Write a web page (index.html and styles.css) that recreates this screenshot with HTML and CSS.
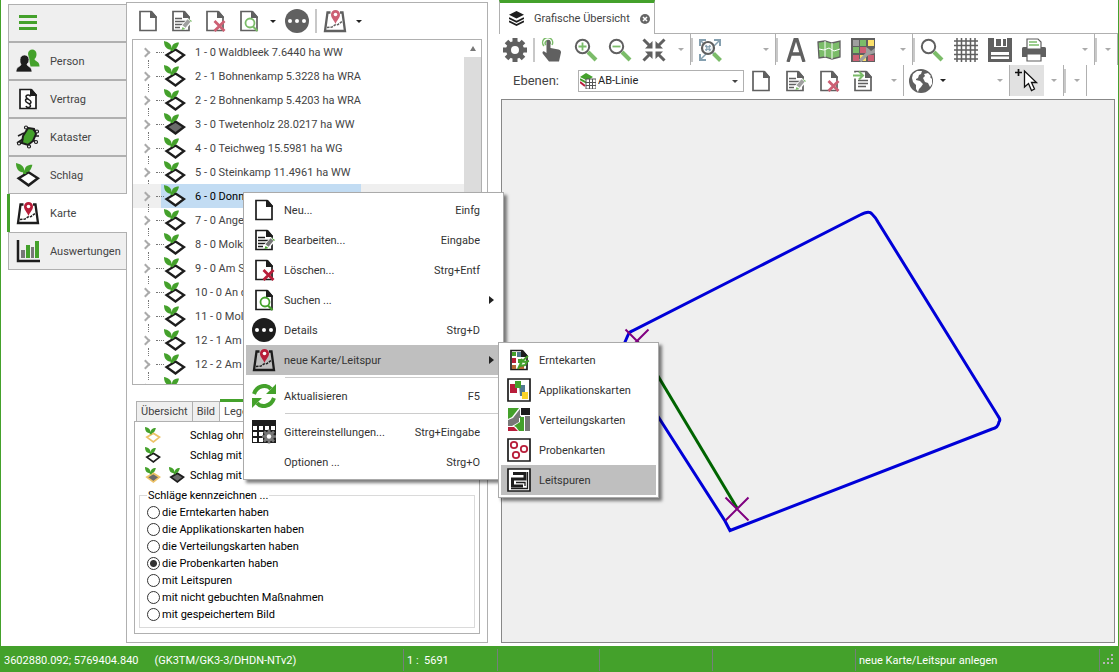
FILE: index.html
```html
<!DOCTYPE html>
<html lang="de">
<head>
<meta charset="utf-8">
<meta name="viewport" content="width=device-width, initial-scale=1">
<title>Grafische Übersicht</title>
<link rel="stylesheet" href="styles.css">
</head>
<body>
<svg class="sprite" aria-hidden="true">
  <symbol id="doc" viewBox="0 0 24 24"><path d="M4 2.500h11L20 8v13.500H4z" fill="#fff" stroke="#1d1d1d" stroke-width="1.700"/><path d="M14 2h2l5 6v1h-7z" fill="#1d1d1d"/></symbol>
  <symbol id="edit" viewBox="0 0 24 24"><use href="#doc"/><path d="M6 9.500h7M6 12.500h11M6 15.500h8M6 18.500h5" stroke="#1d1d1d" stroke-width="1.500"/><path d="M14 19l7-8" stroke="#fff" stroke-width="6"/><path d="M15 17.500l5-6" stroke="#777" stroke-width="4"/><path d="M19 9.500l4 2.500-1 1M12.500 21l1-3 3 2z" fill="#44a12b"/></symbol>
  <symbol id="delete" viewBox="0 0 24 24"><use href="#doc"/><path d="M11.500 12l10 10M21.500 12l-10 10" stroke="#b81e3a" stroke-width="2.800"/></symbol>
  <symbol id="search" viewBox="0 0 24 24"><use href="#doc"/><circle cx="13" cy="14" r="4.500" fill="none" stroke="#44a12b" stroke-width="1.800"/><path d="M16 17.500l4.500 4.500" stroke="#44a12b" stroke-width="2.200"/></symbol>
  <symbol id="dots" viewBox="0 0 24 24"><circle cx="12" cy="12" r="12" fill="#1d1d1d"/><g fill="#fff"><circle cx="5" cy="12" r="2"/><circle cx="12" cy="12" r="2"/><circle cx="19" cy="12" r="2"/></g></symbol>
  <symbol id="karte" viewBox="0 0 24 24"><path d="M7.500 3.500H4.500L2 22h20L19.500 3.500H17" fill="none" stroke="#1d1d1d" stroke-width="2.300"/><path d="M4 18.500l5-.5 3-2 3-.5 4-3" fill="none" stroke="#1d1d1d" stroke-width="1.500" stroke-dasharray="2.500 1"/><path d="M12.500 15C11 11 8 9 8 5.500a4.500 4.500 0 0 1 9 0C17 9 14 11 12.500 15z" fill="#b81e3a"/><circle cx="12.500" cy="5.500" r="1.800" fill="#fff"/></symbol>
  <symbol id="leaf" viewBox="0 0 22 22"><path d="M0 0c4 1 7.500 2 8 8.500C3 9 0 6 0 0zM15 1.500c-5 0-7.500 2-7 7C12 9 14 6 15 1.500z" fill="#44a12b"/><path d="M6.500 7v3h3L9 7z" fill="#44a12b"/></symbol>
  <symbol id="field" viewBox="0 0 22 22"><path d="M11.500 8.500L20 14l-8.500 6.500L2.500 14z" fill="#fff" stroke="#1d1d1d" stroke-width="2.300"/><use href="#leaf" width="22" height="22"/></symbol>
  <symbol id="fielddark" viewBox="0 0 22 22"><path d="M11.500 8.500L20 14l-8.500 6.500L2.500 14z" fill="#6b6b6b" stroke="#1d1d1d" stroke-width="2.300"/><use href="#leaf" width="22" height="22"/></symbol>
  <symbol id="fieldgold" viewBox="0 0 22 22"><path d="M11.500 8.500L20 14l-8.500 6.500L2.500 14z" fill="#fff" stroke="#edc267" stroke-width="2.300"/><use href="#leaf" width="22" height="22"/></symbol>
  <symbol id="fieldgolddark" viewBox="0 0 22 22"><path d="M11.500 8.500L20 14l-8.500 6.500L2.500 14z" fill="#6b6b6b" stroke="#edc267" stroke-width="2.300"/><use href="#leaf" width="22" height="22"/></symbol>
  <symbol id="burger" viewBox="0 0 24 24"><path d="M3 5.500h18M3 11.500h18M3 17.500h18" stroke="#44a12b" stroke-width="3"/></symbol>
  <symbol id="person" viewBox="0 0 24 24"><path d="M12 5c0-6 8.500-6 8.500 0 0 3-1 4-2 5 .5 3 5 1.500 5 7.500h-9z" fill="#44a12b"/><path d="M4 10.500c0-6 9-6 9 0 0 3-1 3.500-2 4.500 0 3 5 2 5 8H0c0-6 5-5 5-8-1-1-1-1.500-1-4.500z" fill="#1d1d1d" stroke="#efefef" stroke-width=".7"/></symbol>
  <symbol id="vertrag" viewBox="0 0 24 24"><use href="#doc"/><path d="M14.500 9.500c-.5-2-4.500-2-4.500.3 0 2.400 5 2.700 5 5.200 0 1.300-1 1.700-2 1.700M10 19c.5 2 4.500 2 4.500-.3 0-2.400-5-2.700-5-5.200 0-1.300 1-1.700 2-1.700" fill="none" stroke="#1d1d1d" stroke-width="1.500"/></symbol>
  <symbol id="kataster" viewBox="0 0 24 24"><path d="M12 3l6 1 2 5-3 7-5 4-6-2 1-7z" fill="#44a12b" stroke="#1d1d1d" stroke-width="2"/><path d="M12 4L9 2M17 5l4 2M8 8l-6 3M19 11l4 0M7 14l-6 4M17 15l4 3M12 19l2 3M6 17l-4 2" stroke="#1d1d1d" stroke-width="1.700"/><g fill="#fff" stroke="#1d1d1d" stroke-width="1.200"><circle cx="10" cy="2.500" r="1.500"/><circle cx="21" cy="6.500" r="1.500"/><circle cx="20" cy="17" r="1.500"/><circle cx="13" cy="21.500" r="1.500"/><circle cx="3" cy="18.500" r="1.500"/></g></symbol>
  <symbol id="bars" viewBox="0 0 24 24"><path d="M2 1v21h22" fill="none" stroke="#1d1d1d" stroke-width="2.500"/><path d="M5 11h4v8H5zM15 8h3v11h-3z" fill="#777"/><path d="M10 6h4v13h-4zM19 2h4v17h-4z" fill="#44a12b"/></symbol>
  <symbol id="layers" viewBox="0 0 16 16"><path d="M8 0l8 4-8 4-8-4z" fill="#1d1d1d"/><path d="M0 7.500l8 4 8-4M0 11l8 4 8-4" fill="none" stroke="#1d1d1d" stroke-width="1.800"/></symbol>
  <symbol id="gear" viewBox="0 0 24 24"><circle cx="12" cy="12" r="6.500" fill="none" stroke="#1d1d1d" stroke-width="5"/><path d="M12 0v5M12 19v5M0 12h5M19 12h5M3.500 3.500l4 4M16.500 16.500l4 4M3.500 20.500l4-4M16.500 7.500l4-4" stroke="#1d1d1d" stroke-width="5"/></symbol>
  <symbol id="hand" viewBox="0 0 24 24"><path d="M4 8a5 5 0 1 1 8-1M6 7a2.500 2.500 0 1 1 4-1" fill="none" stroke="#44a12b" stroke-width="1.500"/><path d="M6.500 4c0-3 4-3 4 0v6l8 1.500c2 .5 2.500 1.500 2.500 3L19 23.500H9L3 16c-1.500-2 .5-4 2-2l1.500 1z" fill="#1d1d1d"/></symbol>
  <symbol id="lens" viewBox="0 0 24 24"><circle cx="8.500" cy="8.500" r="6.700" fill="#fff" stroke="#1d1d1d" stroke-width="2"/><path d="M14 14l8 8" stroke="#44a12b" stroke-width="4"/></symbol>
  <symbol id="zoomin" viewBox="0 0 24 24"><use href="#lens"/><path d="M4.500 8.500h8M8.500 4.500v8" stroke="#44a12b" stroke-width="1.800"/></symbol>
  <symbol id="zoomout" viewBox="0 0 24 24"><use href="#lens"/><path d="M4.500 8.500h8" stroke="#44a12b" stroke-width="1.800"/></symbol>
  <symbol id="shrink" viewBox="0 0 24 24"><path d="M1.500 1.500l6 6M22.500 1.500l-6 6M1.500 22.500l6-6M22.500 22.500l-6-6" stroke="#1d1d1d" stroke-width="3"/><path d="M10.500 10.500H3l7.500-7.500zM13.500 10.500H21L13.500 3zM10.500 13.500H3l7.500 7.500zM13.500 13.500H21L13.500 21z" fill="#1d1d1d"/></symbol>
  <symbol id="fit" viewBox="0 0 24 24"><path d="M3 3l18 18M21 3L3 21" stroke="#527990" stroke-width="1.500"/><circle cx="10" cy="10" r="6" fill="#fff" fill-opacity=".8" stroke="#1d1d1d" stroke-width="2.200"/><path d="M15.500 15.500l7 7" stroke="#44a12b" stroke-width="4"/><path d="M2 8V2h6M16 2h6v6M2 16v6h6M7.500 7.500l2 2M12.500 7.500l-2 2M7.500 12.500l2-2M12.500 12.500l-2-2" fill="none" stroke="#527990" stroke-width="2"/></symbol>
  <symbol id="letter" viewBox="0 0 24 24"><path d="M5 24L12 1.500h2L21 24M8 16h10" fill="none" stroke="#1d1d1d" stroke-width="3.300"/></symbol>
  <symbol id="map" viewBox="0 0 24 24"><path d="M1 4l7-1 7 2 8-2v16l-8 2-7-2-6 1z" fill="#44a12b" stroke="#1d1d1d" stroke-width="1.300"/><path d="M8 3v16M15 5v16M2 11l5 1 5-2 5 3 6-2" fill="none" stroke="#fff"/></symbol>
  <symbol id="colors" viewBox="0 0 24 24"><path d="M0 0h24v24H0z" fill="#1d1d1d"/><path d="M2 2h6v6H2z" fill="#777"/><path d="M9 2h6v6H9zM2 9h6v6H2z" fill="#44a12b"/><path d="M17 2h6v6h-6z" fill="#fbd52c"/><path d="M9 9h6v6H9zM2 17h6v6H2zM17 17h6v6h-6z" fill="#b81e3a"/><path d="M9 17h6v6H9z" fill="#fbd52c"/><path d="M9 23l9-9" stroke="#777" stroke-width="3.500"/><path d="M15 9v5l3 3 6-2v-5l-4 3-2-2z" fill="#777"/></symbol>
  <symbol id="hash" viewBox="0 0 24 24"><path d="M3 0v24M7.500 0v24M12 0v24M16.500 0v24M21 0v24M0 3h24M0 7.500h24M0 12h24M0 16.500h24M0 21h24" stroke="#1d1d1d" stroke-width="1.500"/></symbol>
  <symbol id="floppy" viewBox="0 0 24 24"><path d="M0 0h24v24H0z" fill="#1d1d1d"/><path d="M6 0h13v9H6zM3 14h18v7H3z" fill="#fff"/><path d="M8 1h5v7H8zM15 1h3v7h-3zM3 17h18v1.500H3z" fill="#1d1d1d"/></symbol>
  <symbol id="printer" viewBox="0 0 24 24"><path d="M0 11c0-2 1-2 3-2h18c2 0 3 0 3 2v8H0z" fill="#1d1d1d"/><path d="M5 1h11l3 3v7H5zM5 16h14v7H5z" fill="#fff" stroke="#1d1d1d" stroke-width="1.200"/><path d="M7 4h8M7 7h10" stroke="#44a12b" stroke-width="1.500"/></symbol>
  <symbol id="list" viewBox="0 0 24 24"><use href="#doc"/><path d="M7 11.500h10M7 14.500h10M7 17.500h8" stroke="#1d1d1d" stroke-width="1.500"/><path d="M2 3.500h7v6H2z" fill="#fff"/><path d="M2 6.500h9M8 2.500l4 4-4 4" fill="none" stroke="#44a12b" stroke-width="2"/></symbol>
  <symbol id="globe" viewBox="0 0 24 24"><circle cx="12" cy="12" r="12" fill="#1d1d1d"/><path d="M4 5l4-3 5 0-1 3-2 1-1 3-2 1 0 1 4 1 3 3-2 3-2 2-1 3-2-3 0-4-3-3-1-4zM15 5l4-1 3 3-1 1 2 2 0 5-2 3-2-4-3-1-2-4 2-2z" fill="#fff"/></symbol>
  <symbol id="cursor" viewBox="0 0 24 24"><path d="M0 3.500h7M3.500 0v7" stroke="#111" stroke-width="1.700"/><path d="M9.500 2v16l4-3.500 3 7 3-1.500-3-6.500h5z" fill="#fff" stroke="#111" stroke-width="1.300"/></symbol>
  <symbol id="refresh" viewBox="0 0 24 24"><path d="M2 10C5 1 15 0 19 5M22 14c-3 9-13 10-17 5" fill="none" stroke="#44a12b" stroke-width="4"/><path d="M24 0v10H14zM0 24V14h10z" fill="#44a12b"/></symbol>
  <symbol id="gridgear" viewBox="0 0 24 24"><path d="M0 0h24v23H0z" fill="#1d1d1d"/><path d="M1 6h4v4H1zM7 6h4v4H7zM13 6h4v4h-4zM19 6h4v4h-4zM1 12h4v4H1zM7 12h4v4H7zM1 18h4v4H1zM7 18h4v4H7z" fill="#fff"/><circle cx="17" cy="16.500" r="5" fill="#777"/><path d="M17 9.500v14M10 16.500h14M12 11.500l10 10M22 11.500l-10 10" stroke="#777" stroke-width="2.500"/><circle cx="17" cy="16.500" r="2.200" fill="#fff"/></symbol>
  <symbol id="ernte" viewBox="0 0 24 24"><use href="#doc"/><path d="M5 4h4v4H5zM11 11h4v4h-4z" fill="#44a12b"/><path d="M5 10h4v5H5z" fill="#b81e3a"/><path d="M10 4h4v5h-4z" fill="#527990"/><path d="M5 17h4v4H5zM12 17h5v4h-5z" fill="#b66a35"/><path d="M11 21C13 15 16 12 21 8M12 14l3 2M14 11l3 3 5-1M13 18l5-1 2-3" fill="none" stroke="#44a12b" stroke-width="2"/></symbol>
  <symbol id="appli" viewBox="0 0 24 24"><path d="M1 1h22v22H1z" fill="#fff" stroke="#1d1d1d" stroke-width="1.700"/><path d="M12 7h6v11h-5z" fill="#527990"/><path d="M3 6h7v9H3z" fill="#b81e3a"/><path d="M8 3h6v7H8z" fill="#44a12b"/><path d="M15 14h6v7h-6z" fill="#fbd52c"/></symbol>
  <symbol id="verteil" viewBox="0 0 24 24"><path d="M1 0h11L5 9l-4 2z" fill="#44a12b"/><path d="M13 1v7h1v2h-2v4l-7 4H1v-6l5-2z" fill="#777"/><path d="M14 0h9v7h-9z" fill="#1d1d1d"/><path d="M13 9h4v14h-5l-3-4-2-1 6-4z" fill="#44a12b"/><path d="M18 8h5v15h-5z" fill="#777"/><path d="M1 19h6l4 4H1z" fill="#b81e3a"/></symbol>
  <symbol id="proben" viewBox="0 0 24 24"><path d="M1 1h22v22H1z" fill="#fff" stroke="#1d1d1d" stroke-width="1.700"/><g fill="none" stroke="#b81e3a" stroke-width="1.800"><circle cx="7" cy="7" r="3.200"/><circle cx="17" cy="11" r="3.200"/><circle cx="9" cy="17" r="3.200"/></g></symbol>
  <symbol id="leit" viewBox="0 0 24 24"><path d="M1 1h22v22H1z" fill="#fff" stroke="#1d1d1d" stroke-width="1.700"/><path d="M6 5.500h12V11H5.500v7H16" fill="none" stroke="#1d1d1d" stroke-width="3"/><path d="M20.500 4v16.500H4M9 14.500h9V18" fill="none" stroke="#1d1d1d" stroke-width="1.300"/></symbol>
  <symbol id="layergrid" viewBox="0 0 16 16"><path d="M0 9l5 4" stroke="#b81e3a" stroke-width="2"/><path d="M0 6l7 4" stroke="#44a12b" stroke-width="2"/><path d="M6 0l7 4-6 3.500L0 4z" fill="#44a12b"/><path d="M6 6h10v10H6z" fill="#fff" stroke="#555"/><path d="M9.500 6v10M12.500 6v10M6 9.500h10M6 12.500h10" stroke="#555"/></symbol>
</svg>

<div class="app">
  <main class="main">
    <nav class="nav" aria-label="Hauptmenü">
      <button class="nav-item" aria-label="Menü"><svg class="icon"><use href="#burger"/></svg></button>
      <button class="nav-item"><svg class="icon"><use href="#person"/></svg>Person</button>
      <button class="nav-item"><svg class="icon"><use href="#vertrag"/></svg>Vertrag</button>
      <button class="nav-item"><svg class="icon"><use href="#kataster"/></svg>Kataster</button>
      <button class="nav-item"><svg class="icon"><use href="#field"/></svg>Schlag</button>
      <button class="nav-item active"><svg class="icon"><use href="#karte"/></svg>Karte</button>
      <button class="nav-item"><svg class="icon"><use href="#bars"/></svg>Auswertungen</button>
    </nav>

    <section class="side">
      <div class="side-tools">
        <button class="tool" aria-label="Neu"><svg class="icon"><use href="#doc"/></svg></button>
        <button class="tool" aria-label="Bearbeiten"><svg class="icon"><use href="#edit"/></svg></button>
        <button class="tool" aria-label="Löschen"><svg class="icon"><use href="#delete"/></svg></button>
        <button class="tool" aria-label="Suchen"><svg class="icon"><use href="#search"/></svg></button>
        <button class="drop dark" aria-label="Suchoptionen"></button>
        <button class="tool" aria-label="Details"><svg class="icon"><use href="#dots"/></svg></button>
        <span class="grip"></span>
        <button class="tool" aria-label="Karte"><svg class="icon"><use href="#karte"/></svg></button>
        <button class="drop dark" aria-label="Kartenoptionen"></button>
      </div>

      <div class="tree-box">
        <ul class="tree">
          <li class="row"><i class="chev"></i><i class="dots"></i><svg class="leaf"><use href="#field"/></svg><span>1 - 0 Waldbleek 7.6440 ha WW</span></li>
          <li class="row"><i class="chev"></i><i class="dots"></i><svg class="leaf"><use href="#field"/></svg><span>2 - 1 Bohnenkamp 5.3228 ha WRA</span></li>
          <li class="row"><i class="chev"></i><i class="dots"></i><svg class="leaf"><use href="#field"/></svg><span>2 - 2 Bohnenkamp 5.4203 ha WRA</span></li>
          <li class="row"><i class="chev"></i><i class="dots"></i><svg class="leaf"><use href="#fielddark"/></svg><span>3 - 0 Twetenholz 28.0217 ha WW</span></li>
          <li class="row"><i class="chev"></i><i class="dots"></i><svg class="leaf"><use href="#field"/></svg><span>4 - 0 Teichweg 15.5981 ha WG</span></li>
          <li class="row"><i class="chev"></i><i class="dots"></i><svg class="leaf"><use href="#field"/></svg><span>5 - 0 Steinkamp 11.4961 ha WW</span></li>
          <li class="row selected"><i class="chev"></i><i class="dots"></i><svg class="leaf"><use href="#field"/></svg><span>6 - 0 Donn</span></li>
          <li class="row"><i class="chev"></i><i class="dots"></i><svg class="leaf"><use href="#field"/></svg><span>7 - 0 Ange</span></li>
          <li class="row"><i class="chev"></i><i class="dots"></i><svg class="leaf"><use href="#field"/></svg><span>8 - 0 Molke</span></li>
          <li class="row"><i class="chev"></i><i class="dots"></i><svg class="leaf"><use href="#field"/></svg><span>9 - 0 Am S</span></li>
          <li class="row"><i class="chev"></i><i class="dots"></i><svg class="leaf"><use href="#field"/></svg><span>10 - 0 An d</span></li>
          <li class="row"><i class="chev"></i><i class="dots"></i><svg class="leaf"><use href="#field"/></svg><span>11 - 0 Moll</span></li>
          <li class="row"><i class="chev"></i><i class="dots"></i><svg class="leaf"><use href="#field"/></svg><span>12 - 1 Am</span></li>
          <li class="row"><i class="chev"></i><i class="dots"></i><svg class="leaf"><use href="#field"/></svg><span>12 - 2 Am</span></li>
          <li class="row"><i class="chev"></i><i class="dots"></i><svg class="leaf"><use href="#field"/></svg></li>
        </ul>
        <div class="scroll"><button class="scroll-up" aria-label="Nach oben"></button><div class="thumb"></div></div>
      </div>

      <div class="tabs">
        <button class="tab">Übersicht</button>
        <button class="tab">Bild</button>
        <button class="tab on">Legende</button>
      </div>
      <div class="legend">
        <div class="legend-row"><div class="keys"><svg class="mini"><use href="#fieldgold"/></svg></div>Schlag ohn</div>
        <div class="legend-row"><div class="keys"><svg class="mini"><use href="#field"/></svg></div>Schlag mit V</div>
        <div class="legend-row"><div class="keys"><svg class="mini"><use href="#fieldgolddark"/></svg><svg class="mini"><use href="#fielddark"/></svg></div>Schlag mit K</div>
        <fieldset class="marks">
          <legend>Schläge kennzeichnen ...</legend>
          <label><input type="radio" name="mark">die Erntekarten haben</label>
          <label><input type="radio" name="mark">die Applikationskarten haben</label>
          <label><input type="radio" name="mark">die Verteilungskarten haben</label>
          <label><input type="radio" name="mark" checked>die Probenkarten haben</label>
          <label><input type="radio" name="mark">mit Leitspuren</label>
          <label><input type="radio" name="mark">mit nicht gebuchten Maßnahmen</label>
          <label><input type="radio" name="mark">mit gespeichertem Bild</label>
        </fieldset>
      </div>
    </section>

    <section class="work">
      <div class="doc-tabs">
        <div class="doc-tab">
          <svg class="tab-icon"><use href="#layers"/></svg>
          <span>Grafische Übersicht</span>
          <button class="close" aria-label="Schließen"><svg viewBox="0 0 10 10"><circle cx="5" cy="5" r="5" fill="#666"/><path d="M3 3l4 4M7 3l-4 4" stroke="#fff" stroke-width="1.500"/></svg></button>
        </div>
      </div>
      <div class="bar">
        <div class="group g-main">
          <button class="tool" aria-label="Einstellungen"><svg class="icon"><use href="#gear"/></svg></button>
          <span class="grip"></span>
          <button class="tool" aria-label="Auswählen"><svg class="icon"><use href="#hand"/></svg></button>
          <button class="tool" aria-label="Vergrößern"><svg class="icon"><use href="#zoomin"/></svg></button>
          <button class="tool" aria-label="Verkleinern"><svg class="icon"><use href="#zoomout"/></svg></button>
          <button class="tool" aria-label="Zentrieren"><svg class="icon"><use href="#shrink"/></svg></button>
          <button class="drop" aria-label="Mehr"></button>
        </div>
        <div class="group g-fit">
          <span class="grip"></span>
          <button class="tool" aria-label="Einpassen"><svg class="icon"><use href="#fit"/></svg></button>
          <button class="drop" aria-label="Mehr"></button>
        </div>
        <div class="group g-style">
          <span class="grip"></span>
          <button class="tool" aria-label="Beschriftung"><svg class="icon"><use href="#letter"/></svg></button>
          <button class="tool" aria-label="Karte"><svg class="icon"><use href="#map"/></svg></button>
          <button class="tool" aria-label="Farben"><svg class="icon"><use href="#colors"/></svg></button>
          <button class="drop" aria-label="Mehr"></button>
        </div>
        <div class="group g-output">
          <span class="grip"></span>
          <button class="tool" aria-label="Suchen"><svg class="icon"><use href="#lens"/></svg></button>
          <button class="tool" aria-label="Gitter"><svg class="icon"><use href="#hash"/></svg></button>
          <button class="tool" aria-label="Speichern"><svg class="icon"><use href="#floppy"/></svg></button>
          <button class="tool" aria-label="Drucken"><svg class="icon"><use href="#printer"/></svg></button>
          <button class="drop" aria-label="Mehr"></button>
        </div>
        <div class="group g-more"><span class="grip"></span><button class="drop" aria-label="Mehr"></button></div>
      </div>
      <div class="bar">
        <div class="group g-layer">
          <label class="layer-label" for="layer">Ebenen:</label>
          <div class="combo">
            <svg class="combo-icon"><use href="#layergrid"/></svg>
            <select id="layer"><option>AB-Linie</option></select>
          </div>
          <button class="tool" aria-label="Neue Ebene"><svg class="icon"><use href="#doc"/></svg></button>
          <button class="tool" aria-label="Ebene bearbeiten"><svg class="icon"><use href="#edit"/></svg></button>
          <button class="tool" aria-label="Ebene löschen"><svg class="icon"><use href="#delete"/></svg></button>
          <button class="tool" aria-label="Importieren"><svg class="icon"><use href="#list"/></svg></button>
          <button class="drop" aria-label="Mehr"></button>
        </div>
        <div class="group g-globe">
          <button class="tool" aria-label="Hintergrund"><svg class="icon"><use href="#globe"/></svg></button>
          <span class="down" aria-hidden="true"></span>
          <button class="drop" aria-label="Mehr"></button>
        </div>
        <div class="group g-cursor">
          <button class="tool pressed" aria-label="Zeiger"><svg class="icon"><use href="#cursor"/></svg></button>
          <button class="drop" aria-label="Mehr"></button>
        </div>
        <div class="group g-more"><span class="grip"></span><button class="drop" aria-label="Mehr"></button></div>
      </div>
      <div class="canvas">
        <svg class="plan" fill="none">
          <g transform="translate(-502 -100)">
            <path d="M625 342L628 335Q629 332 632 331L760 266L860 215Q869 210 872 214Q876 218 878 222L998 416Q1001 420 999 422Q998 428 992 429L730 530.500L725 521L659 418L622 360z" stroke="#0000d8" stroke-width="3"/>
            <path d="M637 341L737 508" stroke="#006400" stroke-width="3"/>
            <path d="M625.500 329.500l23 23m0-23l-23 23M725.500 497.500l23 23m0-23l-23 23" stroke="#800080" stroke-width="2"/>
          </g>
        </svg>
      </div>
    </section>
  </main>

  <footer class="status">
    <span class="cell c-pos"><span>3602880.092; 5769404.840</span><span>(GK3TM/GK3-3/DHDN-NTv2)</span></span>
    <span class="cell c-scale">1 :&nbsp; 5691</span>
    <span class="cell c-a"></span>
    <span class="cell c-b"></span>
    <span class="cell c-c"></span>
    <span class="cell c-hint">neue Karte/Leitspur anlegen</span>
    <svg class="sizer" viewBox="0 0 12 12"><path d="M8 0h2v2H8zM4 4h2v2H4zM8 4h2v2H8zM0 8h2v2H0zM4 8h2v2H4zM8 8h2v2H8z" fill="#b5b5b5"/></svg>
  </footer>

  <div class="menu context" role="menu">
    <button class="item" role="menuitem"><svg class="icon"><use href="#doc"/></svg>Neu...<kbd>Einfg</kbd></button>
    <button class="item" role="menuitem"><svg class="icon"><use href="#edit"/></svg>Bearbeiten...<kbd>Eingabe</kbd></button>
    <button class="item" role="menuitem"><svg class="icon"><use href="#delete"/></svg>Löschen...<kbd>Strg+Entf</kbd></button>
    <button class="item more" role="menuitem"><svg class="icon"><use href="#search"/></svg>Suchen ...</button>
    <button class="item" role="menuitem"><svg class="icon"><use href="#dots"/></svg>Details<kbd>Strg+D</kbd></button>
    <button class="item more hot" role="menuitem"><svg class="icon"><use href="#karte"/></svg>neue Karte/Leitspur</button>
    <hr>
    <button class="item" role="menuitem"><svg class="icon"><use href="#refresh"/></svg>Aktualisieren<kbd>F5</kbd></button>
    <hr>
    <button class="item" role="menuitem"><svg class="icon"><use href="#gridgear"/></svg>Gittereinstellungen...<kbd>Strg+Eingabe</kbd></button>
    <button class="item" role="menuitem"><span class="icon"></span>Optionen ...<kbd>Strg+O</kbd></button>
  </div>
  <div class="menu submenu" role="menu">
    <button class="item" role="menuitem"><svg class="icon"><use href="#ernte"/></svg>Erntekarten</button>
    <button class="item" role="menuitem"><svg class="icon"><use href="#appli"/></svg>Applikationskarten</button>
    <button class="item" role="menuitem"><svg class="icon"><use href="#verteil"/></svg>Verteilungskarten</button>
    <button class="item" role="menuitem"><svg class="icon"><use href="#proben"/></svg>Probenkarten</button>
    <button class="item hot" role="menuitem"><svg class="icon"><use href="#leit"/></svg>Leitspuren</button>
  </div>
</div>
</body>
</html>
```
FILE: styles.css
```css
:root {
  --green: #44a12b;
  --line: #b0b0b0;
  --text: #444;
}

* { box-sizing: border-box; }

body {
  margin: 0;
  background: #fff;
  color: var(--text);
  font: 11px/17px Tahoma, Roboto, sans-serif;
}

button, select, input, kbd { font: inherit; color: inherit; }
button { border: 0; padding: 0; background: none; }

.sprite { position: absolute; width: 0; height: 0; }
.icon { width: 24px; height: 24px; flex: none; }

.app {
  position: relative;
  display: flex;
  flex-direction: column;
  height: 100vh;
  border: solid var(--green);
  border-width: 0 1px;
}

.main { flex: 1; display: flex; min-height: 0; }

/* Navigation */
.nav { position: relative; z-index: 1; width: 118px; margin: 4px 0 0 7px; flex: none; }
.nav-item {
  display: flex;
  align-items: center;
  gap: 10px;
  width: 100%;
  height: 38px;
  padding-left: 7px;
  border: 1px solid var(--line);
  border-right: 0;
  background: #efefef;
  text-align: left;
}
.nav-item.active {
  width: 120px;
  margin-left: -1px;
  padding-left: 6px;
  border: 0;
  border-left: 3px solid var(--green);
  background: #fff;
}

/* Side panel */
.side {
  display: flex;
  flex-direction: column;
  width: 362px;
  flex: none;
  margin: 2px 0 3px;
  padding: 0 5px 8px;
  border: 1px solid var(--line);
}
.side-tools { display: flex; align-items: center; height: 36px; flex: none; }
.tool {
  display: grid;
  place-items: center;
  width: 34px;
  height: 31px;
  flex: none;
}
.tool .icon { opacity: .7; }
.tool.pressed { background: #e1e1e1; }
.tool.pressed .icon { opacity: 1; }
.side-tools .tool:first-child { width: 32px; }
.side-tools .grip { margin: 0 1px; }
.grip { width: 2px; height: 24px; background: #c8c8c8; flex: none; }
.drop { display: grid; place-items: center; width: 18px; height: 24px; flex: none; color: #aaa; }
.drop::before, .down::before {
  content: "";
  border: 3px solid transparent;
  border-top-color: currentColor;
  border-bottom: 0;
}
.drop.dark { width: 14px; color: #222; }
.down { display: grid; place-items: center; width: 10px; color: #222; }

.tree-box { display: flex; flex: 0 0 346px; overflow: hidden; border: 1px solid var(--line); }
.tree { flex: 1; margin: 0; padding: 0; list-style: none; overflow: hidden; }
.row { position: relative; display: flex; align-items: center; height: 24px; padding-left: 9px; }
.row span { padding-left: 9px; }
.chev {
  width: 7px;
  height: 7px;
  border: solid #aaa;
  border-width: 2px 2px 0 0;
  transform: rotate(45deg);
  margin-right: 7px;
}
.dots { width: 8px; border-top: 1px dotted #777; }
.row::after {
  content: "";
  position: absolute;
  left: 15px;
  top: 20px;
  height: 8px;
  border-left: 1px dotted #777;
}
.leaf { width: 22px; height: 22px; flex: none; }
.selected {
  background: linear-gradient(to right, #efefef 28px, #c2dcf3 28px, #c2dcf3 228px, #efefef 228px);
  color: #000;
}
.scroll { width: 17px; display: flex; flex-direction: column; }
.scroll-up { display: grid; place-items: center; height: 17px; }
.scroll-up::before { content: ""; border: 3px solid transparent; border-bottom: 5px solid #777; border-top: 0; }
.thumb { flex: 1; background: #dcdcdc; }

.tabs { display: flex; align-items: flex-end; height: 22px; margin: 14px 0 0 4px; flex: none; }
.tab { height: 20px; padding: 0 4px; border: 1px solid var(--line); border-bottom: 0; background: #efefef; }
.tab + .tab { border-left: 0; }
.tab.on { height: 22px; border-top: 3px solid var(--green); background: #fff; }
.legend {
  flex: 1;
  margin: 0 2px;
  padding: 3px 4px;
  border: 1px solid var(--line);
  color: #000;
}
.legend-row { display: flex; align-items: center; height: 20px; padding-left: 6px; }
.keys { display: flex; gap: 8px; width: 45px; }
.mini { width: 16px; height: 16px; }
.marks { margin: 2px 0 0; padding: 0 7px 4px; border: 1px solid #dadada; }
.marks legend { padding: 0 1px; }
.marks label { display: flex; align-items: center; gap: 2px; height: 17px; }
.marks input {
  appearance: none;
  width: 13px;
  height: 13px;
  margin: 0;
  border: 1px solid #333;
  border-radius: 50%;
}
.marks input:checked { background: radial-gradient(circle, #333 3px, transparent 4px); }

/* Work area */
.work { flex: 1; min-width: 0; display: flex; flex-direction: column; margin-left: 11px; }
.doc-tabs { display: flex; height: 34px; border-bottom: 1px solid var(--line); flex: none; }
.doc-tab {
  display: flex;
  align-items: center;
  gap: 10px;
  height: 34px;
  padding: 0 4px 0 9px;
  border: 1px solid var(--line);
  border-top: 3px solid var(--green);
  border-bottom: 0;
  background: #fff;
}
.tab-icon { width: 15px; height: 15px; }
.close, .close svg { display: block; width: 10px; height: 10px; }
.bar { display: flex; height: 31px; flex: none; }
.group { display: flex; align-items: center; height: 31px; border-right: 1px solid var(--line); flex: none; }
.group .drop { margin-left: auto; }
.g-main { width: 192px; }
.g-fit { width: 85px; }
.g-style { width: 137px; }
.g-output { width: 182px; }
.g-more { width: 23px; }
.g-layer { width: 405px; padding-left: 14px; }
.g-globe { width: 106px; }
.g-cursor { width: 54px; }
.g-main .tool:first-child { width: 32px; }
.g-main .grip { margin: 0 0 0 2px; }
.layer-label { width: 65px; font-size: 13px; }
.combo { position: relative; width: 166px; }
.combo select {
  appearance: none;
  width: 100%;
  height: 22px;
  padding: 0 16px 0 19px;
  border: 1px solid var(--line);
  border-radius: 0;
  background: #fff;
  color: #222;
}
.combo-icon { position: absolute; left: 2px; top: 3px; width: 16px; height: 16px; }
.combo::after {
  content: "";
  position: absolute;
  right: 6px;
  top: 10px;
  border: 3px solid transparent;
  border-top-color: #444;
  border-bottom: 0;
}
.canvas { flex: 1; min-height: 0; margin: 3px 3px 3px 2px; border: 1px solid #888; background: #efefef; }
.plan { display: block; width: 100%; height: 100%; }

/* Status bar */
.status { display: flex; align-items: center; height: 26px; padding-top: 2px; flex: none; background: var(--green); color: #fff; }
.cell { display: flex; gap: 16px; align-items: center; height: 22px; padding-left: 3px; border-right: 1px solid #74807a; flex: none; }
.c-pos { width: 403px; }
.c-scale { width: 94px; }
.c-a { width: 102px; }
.c-b { width: 113px; }
.c-c { width: 143px; }
.c-hint { flex: 1; }
.sizer { width: 12px; height: 12px; margin: 0 3px; }

/* Menus */
.menu {
  position: absolute;
  z-index: 2;
  padding: 2px;
  border: 1px solid #aaa;
  background: #fff;
  color: #333;
  box-shadow: 3px 3px 3px rgba(0, 0, 0, .5);
}
.context { left: 242px; top: 192px; width: 261px; }
.submenu { left: 497px; top: 342px; width: 161px; }
.item {
  display: flex;
  align-items: center;
  gap: 8px;
  width: 100%;
  height: 30px;
  padding: 0 21px 0 6px;
  text-align: left;
}
.item.hot { background: #bfbfbf; }
.item kbd { margin-left: auto; }
.item.more { padding-right: 7px; }
.item.more::after { content: ""; margin-left: auto; border: 4px solid transparent; border-left: 5px solid #222; border-right: 0; }
.menu hr { margin: 2px 2px 3px 39px; border: 0; border-top: 1px solid #ccc; }
```
